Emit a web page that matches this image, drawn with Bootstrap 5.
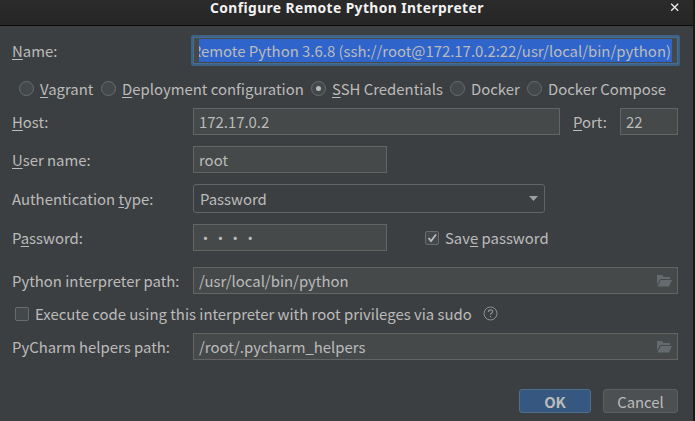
<!DOCTYPE html>
<html lang="en" data-bs-theme="dark">
<head>
<meta charset="utf-8">
<title>Configure Remote Python Interpreter</title>
<link href="https://cdn.jsdelivr.net/npm/bootstrap@5.3.0/dist/css/bootstrap.min.css" rel="stylesheet">
<style>
html,body{height:421px;overflow:hidden}
body{background:#1b1a19;color:#bbb;font:14.9px/20px "Noto Sans CJK SC","Noto Sans",sans-serif;white-space:nowrap}
.dialog{width:693px;height:421px;background:#3c3f41}
.titlebar{height:26px;background:linear-gradient(#2b2b2b,#262626);border-bottom:1px solid #0a0a0a;color:#f2f2f2;font:bold 13.8px/16px "Noto Sans",sans-serif}
.titlebar .name{margin-left:210px;letter-spacing:.42px}
.titlebar svg{margin:3px 13px 0 0}
.content{padding:0 15px 0 12px}
.line{display:flex;align-items:center;height:27px}
.caption{width:181px;flex:none}
u{text-decoration-thickness:1px;text-underline-offset:2px;text-decoration-skip-ink:none}
.form-control,.form-select{height:27px;padding:0 5px;border:1px solid #646464;border-radius:0;background:#45494a;color:#bbb;font-size:inherit;line-height:25px;overflow:hidden}
.form-select{height:29px;padding-left:6px;padding-right:6px;background:#3c3f41;border-radius:3px;line-height:27px}
.name-line{height:31px;margin-top:9px}
.focused{height:31px;width:489px;flex:none;margin:0 -2px;border:2px solid #3d6185;border-radius:2px;padding:1px 6px;background:#45494a;box-shadow:inset 0 0 0 1px #466d94}
.picked{height:23px;margin-top:1px;line-height:24px;background:#2f65ca;display:flex;justify-content:flex-end;overflow:hidden;padding-right:1px}
.opt{display:flex;align-items:center}
.ring{width:15px;height:15px;border:1px solid #6b6b6b;border-radius:50%;background:#43494a;flex:none;display:flex;align-items:center;justify-content:center;margin-right:6px}
.ring.on::after{content:"";width:5px;height:5px;border-radius:50%;background:#bbb}
.tick{width:14px;height:14px;border:1px solid #6b6b6b;border-radius:2px;background:#43494a;flex:none;margin-right:6px;display:flex}
.btn{height:24px;padding:0;border-radius:3px;font-size:14.9px;line-height:24px;color:#bbb}
.btn-primary{width:72px;background:#365880;border-color:#4c708c;font-weight:bold}
.btn-secondary{width:75px;background:#4c5052;border-color:#5e6060}
.dots{padding-left:4px}
</style>
</head>
<body>
<div class="dialog d-flex flex-column">
  <header class="titlebar d-flex justify-content-between flex-shrink-0">
    <span class="name">Configure Remote Python Interpreter</span>
    <svg width="10" height="10" viewBox="0 0 10 10" stroke="#eee" stroke-width="1.3"><path d="M1.2 .8l7 7M8.2 .8l-7 7"/></svg>
  </header>
  <main class="content">
    <div class="line name-line"><label class="caption"><u>N</u>ame:</label>
      <div class="focused"><div class="picked"><span>Remote Python 3.6.8 (ssh://root@172.17.0.2:22/usr/local/bin/python)</span></div></div></div>
    <div class="line" style="margin-top:9px;padding-left:7px">
      <span class="opt" style="width:82px"><i class="ring"></i><span><u>V</u>agrant</span></span>
      <span class="opt" style="width:210px"><i class="ring"></i><span><u>D</u>eployment configuration</span></span>
      <span class="opt" style="width:139px"><i class="ring on"></i><span><u>S</u>SH Credentials</span></span>
      <span class="opt" style="width:77px"><i class="ring"></i><span>Docker</span></span>
      <span class="opt"><i class="ring"></i><span>Docker Compose</span></span>
    </div>
    <div class="line" style="margin-top:6px"><label class="caption"><u>H</u>ost:</label>
      <div class="form-control" style="width:367px">172.17.0.2</div>
      <label style="margin-left:13px;width:47px"><u>P</u>ort:</label>
      <div class="form-control" style="width:58px">22</div></div>
    <div class="line" style="margin-top:11px"><label class="caption"><u>U</u>ser name:</label><div class="form-control" style="width:194px">root</div></div>
    <div class="line" style="margin-top:11px;height:29px"><label class="caption">Authentication <u>t</u>ype:</label>
      <div class="form-select d-flex align-items-center justify-content-between" style="width:352px"><span>Password</span><svg width="9" height="5"><path d="M0 0h9L4.5 5z" fill="#9da0a2"/></svg></div></div>
    <div class="line" style="margin-top:11px"><label class="caption">P<u>a</u>ssword:</label>
      <div class="form-control dots" style="width:194px">····</div>
      <span class="opt" style="margin-left:38px"><i class="tick"><svg width="12" height="12" viewBox="0 0 12 12" fill="none" stroke="#bbb" stroke-width="1.8"><path d="M2.5 6l2.5 3L10 2.5"/></svg></i><span>Sav<u>e</u> password</span></span></div>
    <div class="line" style="margin-top:16px"><label class="caption">Python interpreter path:</label>
      <div class="form-control d-flex align-items-center justify-content-between" style="width:485px"><span>/usr/local/bin/python</span><svg width="15" height="12" fill="#646a6e"><path d="M0 0h5l1.5 2H13v2H3L0 10zM3.5 5H15l-3 6.5H.5z"/></svg></div></div>
    <div class="line" style="margin-top:6px;padding-left:3px"><i class="tick"></i><span>Execute code using this interpreter with root privileges via sudo</span>
      <svg style="margin-left:11px" width="15" height="15" viewBox="0 0 15 15" fill="none" stroke="#8d9092"><circle cx="7.5" cy="7.5" r="6.5"/><path d="M5.4 6c0-2.8 4.2-2.7 4.2-.3 0 1.5-2.1 1.5-2.1 3.1M7.5 10v1.3" stroke-width="1.2"/></svg></div>
    <div class="line" style="margin-top:6px"><label class="caption">PyCharm helpers path:</label>
      <div class="form-control d-flex align-items-center justify-content-between" style="width:485px"><span>/root/.pycharm_helpers</span><svg width="15" height="12" fill="#646a6e"><path d="M0 0h5l1.5 2H13v2H3L0 10zM3.5 5H15l-3 6.5H.5z"/></svg></div></div>
    <div class="d-flex justify-content-end" style="margin-top:29px;gap:12px"><button class="btn btn-primary">OK</button><button class="btn btn-secondary">Cancel</button></div>
  </main>
</div>
<script src="https://cdn.jsdelivr.net/npm/bootstrap@5.3.0/dist/js/bootstrap.bundle.min.js"></script>
</body>
</html>
